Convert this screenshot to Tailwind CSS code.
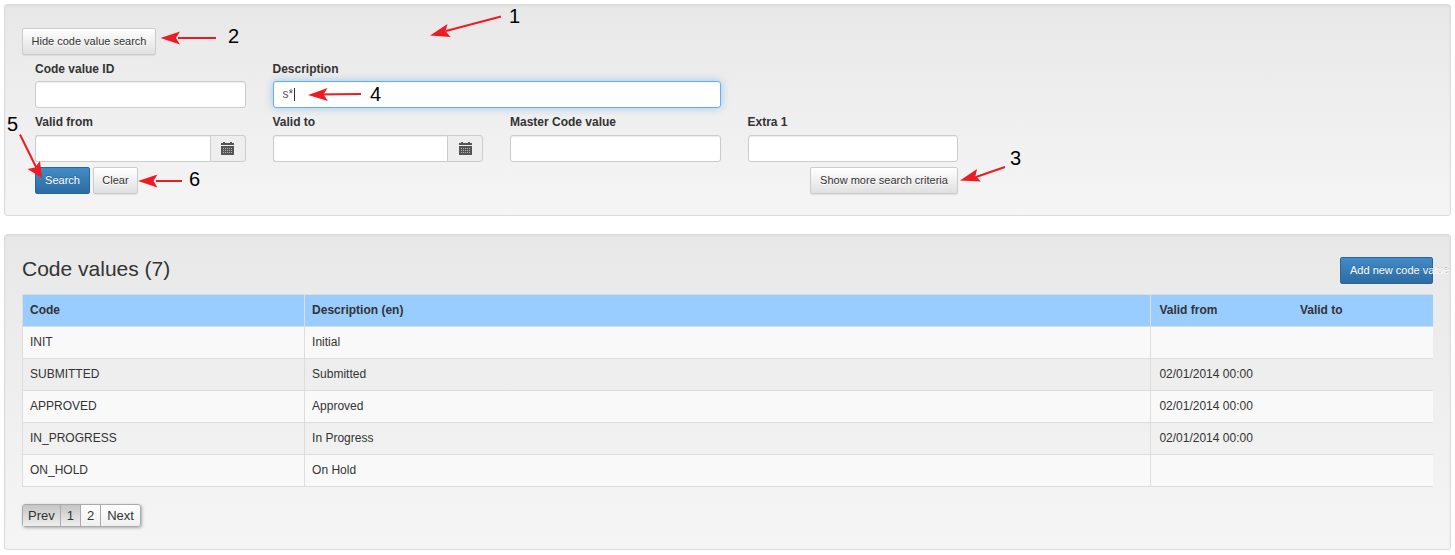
<!DOCTYPE html>
<html lang="en">
<head>
<meta charset="utf-8">
<meta name="viewport" content="width=device-width, initial-scale=1">
<title>Code values</title>
<script src="https://cdn.jsdelivr.net/npm/@tailwindcss/browser@4"></script>
</head>
<body class="relative flex flex-col gap-[18px] overflow-x-hidden bg-white p-1 font-['Liberation_Sans',Arial,sans-serif] text-xs leading-[18px] text-[#333]">

<form onsubmit="return false" class="rounded-[3px] border border-[#dcdcdc] bg-linear-to-b from-[#e8e8e8] to-[#f5f5f5] px-[17px] pt-[23px] pb-[21px] shadow-[inset_0_1px_3px_rgba(0,0,0,0.05),0_1px_0_rgba(255,255,255,0.1)]">
  <button type="button" class="block h-[27px] w-[134px] rounded-[2px] border border-[#ccc] bg-linear-to-b from-white to-[#e0e0e0] pb-0.5 text-center text-[11px] whitespace-nowrap shadow-[inset_0_1px_0_rgba(255,255,255,0.15),0_1px_1px_rgba(0,0,0,0.075)] [text-shadow:0_1px_0_#fff]">Hide code value search</button>

  <div class="-mr-3.5 grid grid-cols-6">
    <div class="pt-[5px] pr-3.5 pl-[13px]">
      <label for="cv-id" class="mb-[3px] block font-bold">Code value ID</label>
      <input id="cv-id" type="text" class="block h-[27px] w-full rounded-[3px] border border-[#ccc] bg-white px-[9px] shadow-[inset_0_1px_1px_rgba(0,0,0,0.075)] outline-none">
    </div>
    <div class="col-span-2 pt-[5px] pr-3.5 pl-[13px]">
      <label for="cv-desc" class="mb-[3px] block font-bold">Description</label>
      <div class="relative">
        <input id="cv-desc" type="text" value="s*" class="block h-[27px] w-full rounded-[3px] border border-[#66afe9] bg-white px-[9px] pb-0.5 text-[#555] shadow-[inset_0_1px_1px_rgba(0,0,0,0.03),0_0_8px_rgba(102,175,233,0.6)] outline-none">
        <span class="absolute top-[7px] left-[21px] h-[13px] w-px bg-[#333]"></span>
      </div>
    </div>
  </div>

  <div class="-mr-3.5 grid grid-cols-6">
    <div class="pt-[5px] pr-3.5 pl-[13px]">
      <label for="cv-from" class="mb-1 block font-bold">Valid from</label>
      <div class="flex h-[27px]">
        <input id="cv-from" type="text" class="min-w-0 flex-1 rounded-l-[3px] border border-r-0 border-[#ccc] bg-white px-[9px] shadow-[inset_0_1px_1px_rgba(0,0,0,0.075)] outline-none">
        <button type="button" aria-label="Pick valid from date" class="flex w-9 items-center justify-center rounded-r-[3px] border border-[#ccc] bg-[#eee] pb-px">
          <svg class="h-[13px] w-[13px]" viewBox="0 0 13 13" shape-rendering="crispEdges"><path fill="#555" d="M2 0h2v1h5V0h2v1h2v2H0V1h2zM0 4h13v9H0z"/><path fill="#b4b4b4" d="M2 6h1v1H2zm2 0h1v1H4zm2 0h1v1H6zm2 0h1v1H8zm2 0h1v1h-1zM2 8h1v1H2zm2 0h1v1H4zm2 0h1v1H6zm2 0h1v1H8zm2 0h1v1h-1zM2 10h1v1H2zm2 0h1v1H4zm2 0h1v1H6zm2 0h1v1H8zm2 0h1v1h-1z"/></svg>
        </button>
      </div>
    </div>
    <div class="pt-[5px] pr-3.5 pl-[13px]">
      <label for="cv-to" class="mb-1 block font-bold">Valid to</label>
      <div class="flex h-[27px]">
        <input id="cv-to" type="text" class="min-w-0 flex-1 rounded-l-[3px] border border-r-0 border-[#ccc] bg-white px-[9px] shadow-[inset_0_1px_1px_rgba(0,0,0,0.075)] outline-none">
        <button type="button" aria-label="Pick valid to date" class="flex w-9 items-center justify-center rounded-r-[3px] border border-[#ccc] bg-[#eee] pb-px">
          <svg class="h-[13px] w-[13px]" viewBox="0 0 13 13" shape-rendering="crispEdges"><path fill="#555" d="M2 0h2v1h5V0h2v1h2v2H0V1h2zM0 4h13v9H0z"/><path fill="#b4b4b4" d="M2 6h1v1H2zm2 0h1v1H4zm2 0h1v1H6zm2 0h1v1H8zm2 0h1v1h-1zM2 8h1v1H2zm2 0h1v1H4zm2 0h1v1H6zm2 0h1v1H8zm2 0h1v1h-1zM2 10h1v1H2zm2 0h1v1H4zm2 0h1v1H6zm2 0h1v1H8zm2 0h1v1h-1z"/></svg>
        </button>
      </div>
    </div>
    <div class="pt-[5px] pr-3.5 pl-[13px]">
      <label for="cv-master" class="mb-1 block font-bold">Master Code value</label>
      <input id="cv-master" type="text" class="block h-[27px] w-full rounded-[3px] border border-[#ccc] bg-white px-[9px] shadow-[inset_0_1px_1px_rgba(0,0,0,0.075)] outline-none">
    </div>
    <div class="pt-[5px] pr-3.5 pl-[13px]">
      <label for="cv-extra" class="mb-1 block font-bold">Extra 1</label>
      <input id="cv-extra" type="text" class="block h-[27px] w-full rounded-[3px] border border-[#ccc] bg-white px-[9px] shadow-[inset_0_1px_1px_rgba(0,0,0,0.075)] outline-none">
    </div>
  </div>

  <div class="-mr-3.5 grid grid-cols-6 pt-[5px]">
    <div class="col-span-4 flex gap-[3px] pr-3.5 pl-[13px] text-[11px]">
      <button type="submit" class="h-[27px] w-[55px] rounded-[2px] border border-[#2b669a] bg-linear-to-b from-[#428bca] to-[#2d6ca2] pb-0.5 text-white [text-shadow:0_-1px_0_rgba(0,0,0,0.2)]">Search</button>
      <button type="reset" class="h-[27px] w-[45px] rounded-[2px] border border-[#ccc] bg-linear-to-b from-white to-[#e0e0e0] pb-0.5 shadow-[0_1px_1px_rgba(0,0,0,0.075)] [text-shadow:0_1px_0_#fff]">Clear</button>
      <button type="button" class="ml-auto h-[27px] w-[148px] rounded-[2px] border border-[#ccc] bg-linear-to-b from-white to-[#e0e0e0] pb-0.5 whitespace-nowrap shadow-[0_1px_1px_rgba(0,0,0,0.075)] [text-shadow:0_1px_0_#fff]">Show more search criteria</button>
    </div>
  </div>
</form>

<section class="rounded-[3px] border border-[#dcdcdc] bg-linear-to-b from-[#e8e8e8] to-[#f5f5f5] px-[17px] pt-[22px] pb-[22px] shadow-[inset_0_1px_3px_rgba(0,0,0,0.05)]">
  <div class="mb-2.5 flex justify-between">
    <h2 class="text-[21px] leading-6">Code values (7)</h2>
    <button type="button" class="h-[27px] w-[93px] rounded-[2px] border border-[#2b669a] bg-linear-to-b from-[#428bca] to-[#2d6ca2] px-[9px] pb-0.5 text-left text-[11px] whitespace-nowrap text-white [text-shadow:0_-1px_0_rgba(0,0,0,0.2)]">Add new code value</button>
  </div>

  <table class="w-full table-fixed border-collapse border-y border-l border-[#ddd] text-left">
    <thead class="bg-[#99ccff]">
      <tr class="h-8">
        <th class="w-1/5 border-r border-[#ddd] px-[7px] pb-0.5">Code</th>
        <th class="w-3/5 border-r border-[#ddd] px-[7px] pb-0.5">Description (en)</th>
        <th class="w-1/10 px-2 pb-0.5">Valid from</th>
        <th class="w-1/10 px-2 pb-0.5">Valid to</th>
      </tr>
    </thead>
    <tbody>
      <tr class="h-8 border-t border-[#ddd] bg-[#f9f9f9]"><td class="border-r border-[#ddd] px-[7px] pb-0.5">INIT</td><td class="border-r border-[#ddd] px-[7px] pb-0.5">Initial</td><td class="px-2 pb-0.5"></td><td class="px-2 pb-0.5"></td></tr>
      <tr class="h-8 border-t border-[#ddd]"><td class="border-r border-[#ddd] px-[7px] pb-0.5">SUBMITTED</td><td class="border-r border-[#ddd] px-[7px] pb-0.5">Submitted</td><td class="px-2 pb-0.5">02/01/2014 00:00</td><td class="px-2 pb-0.5"></td></tr>
      <tr class="h-8 border-t border-[#ddd] bg-[#f9f9f9]"><td class="border-r border-[#ddd] px-[7px] pb-0.5">APPROVED</td><td class="border-r border-[#ddd] px-[7px] pb-0.5">Approved</td><td class="px-2 pb-0.5">02/01/2014 00:00</td><td class="px-2 pb-0.5"></td></tr>
      <tr class="h-8 border-t border-[#ddd]"><td class="border-r border-[#ddd] px-[7px] pb-0.5">IN_PROGRESS</td><td class="border-r border-[#ddd] px-[7px] pb-0.5">In Progress</td><td class="px-2 pb-0.5">02/01/2014 00:00</td><td class="px-2 pb-0.5"></td></tr>
      <tr class="h-8 border-t border-[#ddd] bg-[#f9f9f9]"><td class="border-r border-[#ddd] px-[7px] pb-0.5">ON_HOLD</td><td class="border-r border-[#ddd] px-[7px] pb-0.5">On Hold</td><td class="px-2 pb-0.5"></td><td class="px-2 pb-0.5"></td></tr>
    </tbody>
  </table>

  <nav aria-label="Pages" class="mt-[17px] flex h-[23px] w-fit divide-x divide-[#aaa] rounded-[3px] border border-[#aaa] bg-linear-to-b from-white to-[#efefef] text-[13px] leading-[21px] shadow-[1px_1px_3px_rgba(0,0,0,0.3)]">
    <a href="#" class="bg-linear-to-b from-[#c5c5c5] to-[#efefef] px-[5px]">Prev</a>
    <a href="#" aria-current="page" class="bg-linear-to-b from-[#c5c5c5] to-[#efefef] px-1.5">1</a>
    <a href="#" class="px-1.5">2</a>
    <a href="#" class="px-1.5">Next</a>
  </nav>
</section>

<!-- Numbered callouts drawn over the screen -->
<svg class="pointer-events-none absolute top-0 left-0 h-[216px] w-[1040px]" viewBox="0 0 1040 216">
  <g stroke="#ed1c24" stroke-width="2" fill="none">
    <path d="M501 16.500 446 31M216 38h-38M1005 167l-29 10M361 94l-45 .5M20 134.500 36 167M182 181h-26"/>
  </g>
  <g fill="#ed1c24">
    <path d="M430 35.500 447.500 24 445.500 31 450.500 37zM160.500 38 180 31.500 176 38 180 44.500zM960 180.500 977 169 975.500 176 981 181.500zM308 95 327.500 88 323.500 94.500 328 101zM42 178 27.500 169 35 167.500 40 161zM138 181 157.500 174.500 153.500 181 157.500 187.500z"/>
  </g>
  <g class="fill-black text-[20px]">
    <text x="509" y="23">1</text>
    <text x="228" y="43">2</text>
    <text x="1010" y="165">3</text>
    <text x="370" y="101">4</text>
    <text x="7" y="131">5</text>
    <text x="189" y="186">6</text>
  </g>
</svg>
</body>
</html>
